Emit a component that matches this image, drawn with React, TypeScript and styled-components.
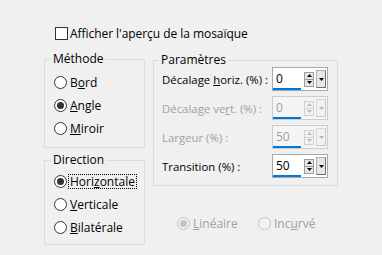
import styled, { createGlobalStyle } from 'styled-components';

const GlobalStyle = createGlobalStyle`
  html, body {
    margin: 0;
    padding: 0;
    background: #f0f0f0;
  }
  body {
    font-family: 'Open Sans', 'Noto Sans', sans-serif;
    font-size: 12px;
    color: #000000;
  }
`;

const Dialog = styled.div`
  width: 382px;
  height: 255px;
  box-sizing: border-box;
  padding: 27px 0 0 44px;
  display: flex;
  flex-direction: column;
`;

const CheckRow = styled.label`
  display: flex;
  align-items: center;
  gap: 2px;
  height: 13px;
  margin-left: 11px;
  line-height: 13px;
  letter-spacing: -0.05px;
`;

const CheckBox = styled.span`
  width: 13px;
  height: 13px;
  box-sizing: border-box;
  border: 1px solid #333333;
  background: #ffffff;
  flex: none;
`;

const Columns = styled.div`
  display: flex;
  gap: 8px;
  margin-top: 12px;
`;

const LeftColumn = styled.div`
  width: 101px;
  display: flex;
  flex-direction: column;
  gap: 5px;
`;

const RightColumn = styled.div`
  width: 185px;
  display: flex;
  flex-direction: column;
  padding-top: 1px;
`;

const Group = styled.fieldset<{ $pt: number; $pb: number; $pl: number }>`
  margin: 0;
  min-width: 0;
  border: 1px solid #dcdcdc;
  padding: ${(p) => p.$pt}px 0 ${(p) => p.$pb}px ${(p) => p.$pl}px;
`;

const Legend = styled.legend`
  margin-left: -3px;
  padding: 0 2px;
  line-height: 14px;
  font-size: 12px;
`;

const RadioRow = styled.div`
  display: flex;
  align-items: center;
  gap: 1px;
  height: 23px;
`;

const RadioCircle = styled.span<{ $checked?: boolean; $disabled?: boolean }>`
  width: 13px;
  height: 13px;
  box-sizing: border-box;
  border-radius: 50%;
  border: 1px solid ${(p) => (p.$disabled ? '#c4c4c4' : '#333333')};
  background: ${(p) => (p.$disabled ? '#f3f3f3' : '#ffffff')};
  display: flex;
  align-items: center;
  justify-content: center;
  flex: none;

  &::after {
    content: '';
    display: ${(p) => (p.$checked ? 'block' : 'none')};
    width: 7px;
    height: 7px;
    border-radius: 50%;
    background: ${(p) => (p.$disabled ? '#c4c4c4' : '#333333')};
  }
`;

const RadioLabel = styled.span<{ $focused?: boolean; $disabled?: boolean }>`
  border: 1px ${(p) => (p.$focused ? 'dotted #000000' : 'solid transparent')};
  padding: 0 1px;
  line-height: 13px;
  color: ${(p) => (p.$disabled ? '#a0a0a0' : '#000000')};
`;

const Key = styled.span`
  text-decoration: underline;
`;

const ParamRow = styled.div`
  display: grid;
  grid-template-columns: 110px 56px;
  align-items: center;
  height: 24px;

  & + & {
    margin-top: 5px;
  }
`;

const ParamLabel = styled.span<{ $disabled?: boolean }>`
  color: ${(p) => (p.$disabled ? '#a0a0a0' : '#000000')};
  font-size: 11.4px;
  white-space: nowrap;
`;

const Field = styled.div<{ $disabled?: boolean }>`
  width: 56px;
  height: 24px;
  box-sizing: border-box;
  border: 1px solid ${(p) => (p.$disabled ? '#cccccc' : '#a8a8a8')};
  background: ${(p) => (p.$disabled ? '#f5f5f5' : '#ffffff')};
  display: flex;
  align-items: center;
`;

const FieldValue = styled.div<{ $disabled?: boolean }>`
  width: 28px;
  height: 22px;
  box-sizing: border-box;
  padding: 3px 0 0 3px;
  border-bottom: 2px solid #0078d7;
  color: ${(p) => (p.$disabled ? '#a0a0a0' : '#000000')};
  line-height: 16px;
  align-self: flex-start;
`;

const Spin = styled.div<{ $disabled?: boolean }>`
  width: 10px;
  height: 15px;
  margin-left: 3px;
  box-sizing: border-box;
  border: 1px solid ${(p) => (p.$disabled ? '#d0d0d0' : '#9c9c9c')};
  background: ${(p) => (p.$disabled ? '#f2f2f2' : '#e6e6e6')};
  display: grid;
  grid-template-rows: 1fr 1fr;
  color: ${(p) => (p.$disabled ? '#b8b8b8' : '#000000')};

  & > span + span {
    border-top: 1px solid ${(p) => (p.$disabled ? '#d0d0d0' : '#9c9c9c')};
  }
`;

const SpinHalf = styled.span`
  display: flex;
  align-items: center;
  justify-content: center;
`;

const DropButton = styled.div<{ $disabled?: boolean }>`
  width: 10px;
  height: 18px;
  margin-left: 2px;
  box-sizing: border-box;
  border: 1px solid ${(p) => (p.$disabled ? '#d6d6d6' : '#adadad')};
  border-right-color: ${(p) => (p.$disabled ? '#c8c8c8' : '#6e6e6e')};
  border-bottom-color: ${(p) => (p.$disabled ? '#c8c8c8' : '#6e6e6e')};
  background: ${(p) => (p.$disabled ? '#f2f2f2' : '#e6e6e6')};
  color: ${(p) => (p.$disabled ? '#b8b8b8' : '#000000')};
  display: flex;
  align-items: center;
  justify-content: center;
`;

const OptionRow = styled.div`
  display: grid;
  grid-template-columns: 81px auto;
  margin-top: 29px;
  padding-left: 24px;
  height: 16px;
  align-items: center;
`;

const Option = styled.div`
  display: flex;
  align-items: center;
  gap: 1px;
`;

const Arrow = ({ down }: { down?: boolean }) => (
  <svg width="5" height="3" viewBox="0 0 5 3">
    <polygon points={down ? '0,0 5,0 2.5,3' : '0,3 5,3 2.5,0'} fill="currentColor" />
  </svg>
);

type SpinFieldProps = { value: string; disabled?: boolean };

const SpinField = ({ value, disabled }: SpinFieldProps) => (
  <Field $disabled={disabled}>
    <FieldValue $disabled={disabled}>{value}</FieldValue>
    <Spin $disabled={disabled}>
      <SpinHalf>
        <Arrow />
      </SpinHalf>
      <SpinHalf>
        <Arrow down />
      </SpinHalf>
    </Spin>
    <DropButton $disabled={disabled}>
      <Arrow down />
    </DropButton>
  </Field>
);

const App = () => {
  return (
    <>
      <GlobalStyle />
      <Dialog>
        <CheckRow>
          <CheckBox />
          Afficher l'aperçu de la mosaïque
        </CheckRow>

        <Columns>
          <LeftColumn>
            <Group $pt={5} $pb={7} $pl={9}>
              <Legend>Méthode</Legend>
              <RadioRow>
                <RadioCircle />
                <RadioLabel>
                  B<Key>o</Key>rd
                </RadioLabel>
              </RadioRow>
              <RadioRow>
                <RadioCircle $checked />
                <RadioLabel>
                  <Key>A</Key>ngle
                </RadioLabel>
              </RadioRow>
              <RadioRow>
                <RadioCircle />
                <RadioLabel>
                  <Key>M</Key>iroir
                </RadioLabel>
              </RadioRow>
            </Group>

            <Group $pt={3} $pb={5} $pl={9}>
              <Legend>Direction</Legend>
              <RadioRow>
                <RadioCircle $checked />
                <RadioLabel $focused>
                  Hori<Key>z</Key>ontale
                </RadioLabel>
              </RadioRow>
              <RadioRow>
                <RadioCircle />
                <RadioLabel>
                  <Key>V</Key>erticale
                </RadioLabel>
              </RadioRow>
              <RadioRow>
                <RadioCircle />
                <RadioLabel>
                  <Key>B</Key>ilatérale
                </RadioLabel>
              </RadioRow>
            </Group>
          </LeftColumn>

          <RightColumn>
            <Group $pt={0} $pb={7} $pl={8}>
              <Legend>Paramètres</Legend>
              <ParamRow>
                <ParamLabel>
                  Décalage <Key>h</Key>oriz. (%) :
                </ParamLabel>
                <SpinField value="0" />
              </ParamRow>
              <ParamRow>
                <ParamLabel $disabled>
                  Décalage ve<Key>r</Key>t. (%) :
                </ParamLabel>
                <SpinField value="0" disabled />
              </ParamRow>
              <ParamRow>
                <ParamLabel $disabled>
                  Lar<Key>g</Key>eur (%) :
                </ParamLabel>
                <SpinField value="50" disabled />
              </ParamRow>
              <ParamRow>
                <ParamLabel>Transition (%) :</ParamLabel>
                <SpinField value="50" />
              </ParamRow>
            </Group>

            <OptionRow>
              <Option>
                <RadioCircle $checked $disabled />
                <RadioLabel $disabled>
                  <Key>L</Key>inéaire
                </RadioLabel>
              </Option>
              <Option>
                <RadioCircle $disabled />
                <RadioLabel $disabled>
                  Inc<Key>u</Key>rvé
                </RadioLabel>
              </Option>
            </OptionRow>
          </RightColumn>
        </Columns>
      </Dialog>
    </>
  );
};

export default App;
